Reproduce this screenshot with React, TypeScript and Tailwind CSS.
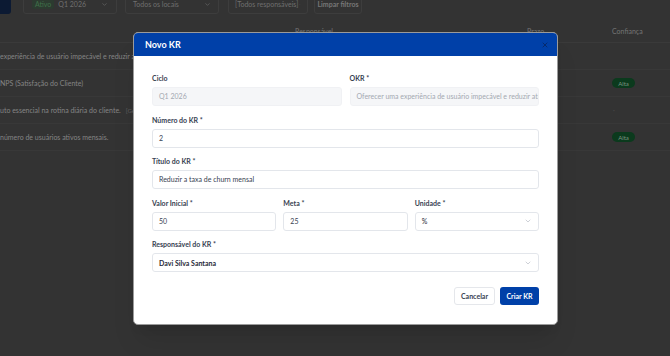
import { ChevronDown, X } from 'lucide-react';

const rows = [
  { text: 'experiência de usuário impecável e reduzir atrito no onboarding', badge: '' },
  { text: 'NPS (Satisfação do Cliente)', badge: 'Alta' },
  { text: 'uto essencial na rotina diária do cliente.', tag: '[Gestão de Produto]', badge: '-' },
  { text: 'número de usuários ativos mensais.', badge: 'Alta' },
];

function Field({ label, children }: { label: string; children: React.ReactNode }) {
  return (
    <div className="flex flex-col">
      <label className="text-[7px] leading-[10px] font-bold text-[#374151] mb-[4px]">{label}</label>
      {children}
    </div>
  );
}

function Input({ value, disabled }: { value: string; disabled?: boolean }) {
  return (
    <div
      className={`h-[19px] rounded-[3px] border px-[6px] flex items-center text-[7px] whitespace-nowrap overflow-hidden ${
        disabled ? 'bg-[#f5f6f8] border-[#f0f1f4] text-[#a3a8b1]' : 'bg-white border-[#e3e6eb] text-[#374151]'
      }`}
    >
      {value}
    </div>
  );
}

function Select({ value, bold }: { value: string; bold?: boolean }) {
  return (
    <div className="h-[19px] rounded-[3px] border border-[#e3e6eb] bg-white px-[6px] flex items-center justify-between text-[7px] text-[#1f2937]">
      <span className={bold ? 'font-bold' : ''}>{value}</span>
      <ChevronDown className="w-[8px] h-[8px] text-[#9ca3af]" strokeWidth={1.5} />
    </div>
  );
}

export default function App() {
  return (
    <div className="relative w-[670px] h-[356px] overflow-hidden bg-[#333333]" style={{ fontFamily: 'Lato, "Noto Sans", sans-serif' }}>
      {/* page behind the dialog */}
      <div className="flex items-center gap-[6px] h-[20px] -mt-[6px] text-[7px] text-[#6f6f6f] whitespace-nowrap">
        <div className="w-[11px] h-[20px] rounded-r-[3px] bg-[#0c1a33]" />
        <div className="ml-[6px] w-[94px] h-[20px] border border-[#3d3d3d] rounded-[3px] flex items-center px-[8px] gap-[4px]">
          <span className="px-[3px] rounded-[2px] bg-[#2c3b30] text-[#3f7049]">Ativo</span>
          <span className="flex-1">Q1 2026</span>
          <ChevronDown className="w-[7px] h-[7px]" />
        </div>
        <div className="ml-[2px] w-[94px] h-[20px] border border-[#3d3d3d] rounded-[3px] flex items-center justify-between px-[7px]">
          <span>Todos os locais</span>
          <ChevronDown className="w-[7px] h-[7px]" />
        </div>
        <div className="ml-[3px] w-[80px] h-[20px] border border-[#3d3d3d] rounded-[3px] flex items-center px-[6px] gap-[1px]">
          <span>[Todos responsáveis]</span>
          <ChevronDown className="w-[7px] h-[7px]" />
        </div>
        <div className="w-[48px] h-[20px] border border-[#3d3d3d] rounded-[3px] flex items-center justify-center font-bold text-[#777]">
          Limpar filtros
        </div>
      </div>

      <div className="mt-[7px] text-[7px]">
        <div className="grid grid-cols-[295px_232px_85px_1fr] h-[22px] items-center border-b border-[#3a3a3a] text-[#757575]">
          <span />
          <span>Responsável</span>
          <span>Prazo</span>
          <span>Confiança</span>
        </div>
        {rows.map((r, i) => (
          <div key={i} className="grid grid-cols-[612px_1fr] h-[27px] items-center border-b border-[#383838]">
            <div className="whitespace-nowrap text-[#858585]">
              {r.text}
              {r.tag && <span className="ml-[5px] text-[6px] text-[#5f5f5f]">{r.tag}</span>}
            </div>
            <div>
              {r.badge === 'Alta' && (
                <span className="inline-flex items-center justify-center w-[23px] h-[10px] rounded-full bg-[#0b3a1d] text-[6px] text-[#7d9482]">
                  Alta
                </span>
              )}
              {r.badge === '-' && <span className="ml-[1px] text-[#4a4a4a]">·</span>}
            </div>
          </div>
        ))}
      </div>

      {/* dialog */}
      <div className="absolute left-[133px] top-[32px] w-[425px] rounded-[5px] border-[1.5px] border-[#9b9b9b] bg-white overflow-hidden shadow-xl">
        <div className="h-[23px] bg-[#0040a8] flex items-center justify-between pl-[11px] pr-[8px]">
          <h2 className="text-[9px] font-bold text-white">Novo KR</h2>
          <X className="w-[8px] h-[8px] text-[#0b1f4f]" strokeWidth={2} />
        </div>

        <div className="px-[18px] pt-[17px] pb-[19px] flex flex-col gap-[8.6px]">
          <div className="grid grid-cols-2 gap-x-[8px]">
            <Field label="Ciclo">
              <Input value="Q1 2026" disabled />
            </Field>
            <Field label="OKR *">
              <Input value="Oferecer uma experiência de usuário impecável e reduzir atrito" disabled />
            </Field>
          </div>
          <Field label="Número do KR *">
            <Input value="2" />
          </Field>
          <Field label="Título do KR *">
            <Input value="Reduzir a taxa de churn mensal" />
          </Field>
          <div className="grid grid-cols-3 gap-x-[7px]">
            <Field label="Valor Inicial *">
              <Input value="50" />
            </Field>
            <Field label="Meta *">
              <Input value="25" />
            </Field>
            <Field label="Unidade *">
              <Select value="%" />
            </Field>
          </div>
          <Field label="Responsável do KR *">
            <Select value="Davi Silva Santana" bold />
          </Field>

          <div className="flex justify-end gap-[5px] mt-[6px]">
            <button className="w-[41px] h-[18px] rounded-[3px] border border-[#e5e7eb] bg-white text-[7px] font-bold text-[#374151]">
              Cancelar
            </button>
            <button className="w-[39px] h-[18px] rounded-[3px] bg-[#0040a8] text-[7px] font-bold text-white">
              Criar KR
            </button>
          </div>
        </div>
      </div>
    </div>
  );
}
